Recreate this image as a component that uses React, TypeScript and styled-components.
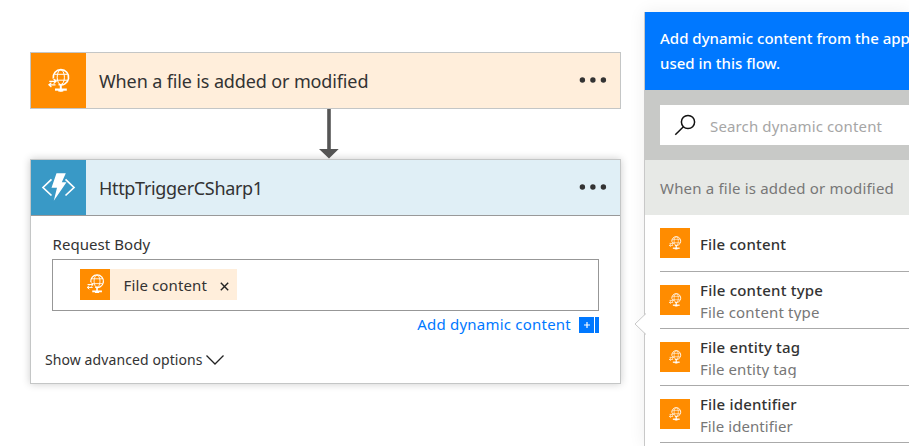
import React from "react";
import styled, { createGlobalStyle } from "styled-components";

const Global = createGlobalStyle`
  * { box-sizing: border-box; }
  body { margin: 0; background: #fff; overflow: hidden; font-family: "Noto Sans", "Open Sans", sans-serif; color: #333; }
`;

const Page = styled.div`
  display: flex;
  width: 909px;
  height: 446px;
  overflow: hidden;
`;

const Flow = styled.main`
  width: 591px;
  margin: 52px 23px 0 30px;
  flex: none;
`;

const Label = styled.span<{ $size: number; $spacing?: number; $color?: string; $weight?: number }>`
  font-size: ${(p) => p.$size}px;
  letter-spacing: ${(p) => p.$spacing ?? 0}px;
  color: ${(p) => p.$color ?? "#333"};
  font-weight: ${(p) => p.$weight ?? 400};
  white-space: nowrap;
`;

const Card = styled.section<{ $raised?: boolean }>`
  border: 1px solid #c4c6c6;
  background: #fff;
  height: ${(p) => (p.$raised ? 225 : 57)}px;
  box-shadow: ${(p) => (p.$raised ? "0 0 8px rgba(0,0,0,0.2)" : "none")};
`;

const CardHeader = styled.header<{ $tint: string; $line?: boolean }>`
  display: flex;
  align-items: center;
  height: ${(p) => (p.$line ? 56 : 55)}px;
  background: ${(p) => p.$tint};
  border-bottom: ${(p) => (p.$line ? "1px solid #999" : "none")};
  padding-right: 13px;
`;

const Tile = styled.div<{ $size: number; $color: string; $height?: number }>`
  display: flex;
  flex: none;
  width: ${(p) => p.$size}px;
  height: ${(p) => p.$height ?? p.$size}px;
  background: ${(p) => p.$color};
  svg { display: block; width: 100%; height: ${(p) => p.$size}px; }
`;

const Title = styled.h2`
  flex: 1;
  margin: 0 0 0 13px;
  line-height: 24px;
  font-weight: 400;
  display: flex;
`;

const Menu = styled.svg`
  display: block;
  margin-bottom: 2px;
`;

const Arrow = styled.svg`
  display: block;
  margin-left: 287px;
`;

const Body = styled.div`
  padding: 17px 21px 0;
  display: flex;
  flex-direction: column;
`;

const FieldName = styled.div`
  display: flex;
  height: 26px;
  line-height: 22px;
  padding-left: 0.5px;
`;

const Field = styled.div`
  display: flex;
  height: 52px;
  width: 547px;
  border: 1px solid #979797;
  padding: 9px 0 0 27px;
`;

const Token = styled.div`
  display: flex;
  align-items: center;
  width: 157px;
  height: 31px;
  background: #ffeedb;
  line-height: 30px;
  ${Label} { margin: 1px 0 0 13.5px; }
`;

const Remove = styled.svg`
  display: block;
  margin: 4px 8px 0 auto;
`;

const AddRow = styled.div`
  display: flex;
  justify-content: flex-end;
  align-items: center;
  width: 547px;
  height: 28px;
  gap: 8px;
  ${Label} { margin-bottom: 2px; }
`;

const Advanced = styled.div`
  display: flex;
  align-items: center;
  margin: 8px 0 0 -7px;
  height: 26px;
  gap: 3px;
  ${Label} { margin-bottom: 2px; }
`;

const Panel = styled.aside`
  position: relative;
  flex: none;
  width: 265px;
  height: 434px;
  margin-top: 12px;
  border-left: 1px solid #c8c8c8;
  box-shadow: 0 0 16px rgba(0, 0, 0, 0.07);
  background: #fff;
`;

const Pointer = styled.svg`
  position: absolute;
  left: -11px;
  top: 301px;
`;

const Banner = styled.div`
  display: flex;
  flex-direction: column;
  height: 78px;
  padding: 14px 0 0 15px;
  background: #0078ff;
  line-height: 25px;
  overflow: hidden;
`;

const SearchBar = styled.div`
  height: 70px;
  background: #c8c9c7;
  padding: 15px 0 15px 15px;
`;

const SearchBox = styled.div`
  display: flex;
  align-items: center;
  height: 40px;
  padding-left: 14px;
  gap: 14px;
  background: #fff;
  ${Label} { margin-top: 2px; }
`;

const Group = styled.div`
  display: flex;
  align-items: center;
  height: 55px;
  padding: 1px 0 0 15px;
  background: #e7e9e6;
`;

const Item = styled.div`
  display: flex;
  height: 57px;
  margin-left: 15px;
  padding-top: 13px;
  border-bottom: 1px solid #aaa;
  gap: 10px;
`;

const ItemText = styled.div<{ $single: boolean }>`
  display: flex;
  flex-direction: column;
  height: ${(p) => (p.$single ? 30 : 44)}px;
  margin-top: ${(p) => (p.$single ? 0 : -8)}px;
  padding-top: ${(p) => (p.$single ? 5 : 2)}px;
  line-height: 22px;
  overflow: hidden;
`;

const GlobeIcon = ({ view = "0 0 55 55" }: { view?: string }) => (
  <svg viewBox={view} fill="none" stroke="#fff">
    <path d="M22.3 25.5A7.7 7.7 0 1 1 27.5 31.6" strokeWidth="1.6" />
    <ellipse cx="29.8" cy="24.2" rx="3.6" ry="7.3" strokeWidth="1" />
    <path d="M23.5 21.3h12.6M23.5 27.2h12.6" strokeWidth="1" />
    <path d="M29.8 31.5v7" strokeWidth="2" />
    <path d="M24 36.6h11.8" strokeWidth="2.2" />
    <path d="M27.3 37.7h5" strokeWidth="1.8" />
    <path d="M18.3 28.3h6.7m-2.4-2.3 2.5 2.3-2.5 2.3M24.5 31.8h-6.5m2.4-2.2-2.5 2.2 2.5 2.2" strokeWidth="1.2" />
  </svg>
);

const FunctionIcon = () => (
  <svg viewBox="0 0 55 55">
    <path d="M20.5 19.3 12 27.5l8.5 8M34.5 19.3l8.5 8.2-8.5 8" fill="none" stroke="#fff" strokeWidth="1.7" />
    <path d="M25.5 13.3h9.3l-4 9h4.7L22.8 40.8l3.2-13h-5.5z" fill="#fff" />
  </svg>
);

const Dots = () => (
  <Menu width="28" height="8" viewBox="0 0 28 8" fill="#333">
    <circle cx="3.4" cy="4" r="2.7" />
    <circle cx="13.9" cy="4" r="2.7" />
    <circle cx="24.4" cy="4" r="2.7" />
  </Menu>
);

const items = [
  { name: "File content", hint: "", nameSpacing: 0.19, hintSpacing: 0 },
  { name: "File content type", hint: "File content type", nameSpacing: 0.22, hintSpacing: 0.17 },
  { name: "File entity tag", hint: "File entity tag", nameSpacing: 0.18, hintSpacing: 0.12 },
  { name: "File identifier", hint: "File identifier", nameSpacing: 0.18, hintSpacing: 0.07 },
];

export default function App() {
  return (
    <>
      <Global />
      <Page>
        <Flow>
          <Card>
            <CardHeader $tint="#ffeedb">
              <Tile $size={55} $color="#ff8c00"><GlobeIcon /></Tile>
              <Title><Label $size={18} $spacing={-0.13}>When a file is added or modified</Label></Title>
              <Dots />
            </CardHeader>
          </Card>
          <Arrow width="24" height="50" viewBox="0 0 24 50" fill="#555">
            <path d="M10.2 0h3.6v40h7.9L12 49.4 2 40h8.2z" />
          </Arrow>
          <Card $raised>
            <CardHeader $tint="#e0eff6" $line>
              <Tile $size={55} $color="#3999c6"><FunctionIcon /></Tile>
              <Title><Label $size={18} $spacing={-0.32}>HttpTriggerCSharp1</Label></Title>
              <Dots />
            </CardHeader>
            <Body>
              <FieldName><Label $size={15} $spacing={0.06}>Request Body</Label></FieldName>
              <Field>
                <Token>
                  <Tile $size={30} $height={31} $color="#ff8c00"><GlobeIcon view="9.1 9.4 36.5 36.5" /></Tile>
                  <Label $size={15} $spacing={0.12}>File content</Label>
                  <Remove width="9" height="9" viewBox="0 0 9 9" stroke="#222" strokeWidth="1.4">
                    <path d="m.8.8 7.4 7.4M8.2.8.8 8.2" />
                  </Remove>
                </Token>
              </Field>
              <AddRow>
                <Label $size={15} $spacing={0.22} $color="#0078ff">Add dynamic content</Label>
                <svg width="20" height="16" viewBox="0 0 20 16">
                  <path d="M0 0h15v16H0zM16 0h4v16h-4z" fill="#0078ff" />
                  <path d="M5 8h6M8 5v6" stroke="#fff" strokeWidth="1.2" />
                </svg>
              </AddRow>
              <Advanced>
                <Label $size={14} $spacing={0.09}>Show advanced options</Label>
                <svg width="18" height="10" viewBox="0 0 18 10" fill="none" stroke="#222" strokeWidth="1.3">
                  <path d="m.5.5 8.5 8.5L17.5.5" />
                </svg>
              </Advanced>
            </Body>
          </Card>
        </Flow>
        <Panel>
          <Banner>
            <Label $size={15} $color="#fff" $weight={500}>Add dynamic content from the apps</Label>
            <Label $size={15} $color="#fff" $weight={500}>used in this flow.</Label>
          </Banner>
          <SearchBar>
            <SearchBox>
              <svg width="22" height="22" viewBox="0 0 22 22" fill="none" stroke="#111" strokeWidth="1.5">
                <circle cx="14" cy="8" r="6.6" />
                <path d="M9.4 12.7 1.3 20.7" />
              </svg>
              <Label $size={15} $spacing={0.14} $color="#a6a6a6">Search dynamic content</Label>
            </SearchBox>
          </SearchBar>
          <Group><Label $size={15} $spacing={0.19} $color="#777">When a file is added or modified</Label></Group>
          {items.map((it) => (
            <Item key={it.name}>
              <Tile $size={30} $color="#ff8c00"><GlobeIcon view="1.7 1.6 52 52" /></Tile>
              <ItemText $single={!it.hint}>
                <Label $size={15} $spacing={it.nameSpacing} $weight={500}>{it.name}</Label>
                {it.hint && <Label $size={15} $spacing={it.hintSpacing} $color="#777">{it.hint}</Label>}
              </ItemText>
            </Item>
          ))}
          <Pointer width="12" height="22" viewBox="0 0 12 22">
            <path d="M12 .5 1 11l11 10.5" fill="#fff" stroke="#c8c8c8" />
          </Pointer>
        </Panel>
      </Page>
    </>
  );
}
